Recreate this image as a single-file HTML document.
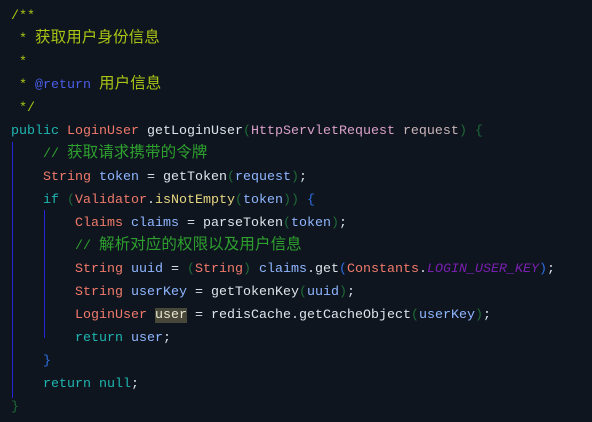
<!DOCTYPE html>
<html><head><meta charset="utf-8"><style>
html,body{margin:0;padding:0;}
body{width:592px;height:422px;overflow:hidden;background:#0e151f;position:relative;
font-family:"Liberation Mono","Noto Sans CJK SC",monospace;font-size:13.33px;}
.l{position:absolute;left:11px;height:23px;line-height:23px;white-space:pre;color:#d5dde6;margin-top:4px;}
.z{font-family:"Noto Sans CJK SC",sans-serif;font-size:15.5px;letter-spacing:0.1px;line-height:0;vertical-align:0}
.c{color:#a9c414}.tag{color:#4a5de8}.g{color:#2ea02e}
.k{color:#1fb5b0}.t{color:#f07a6a}.p{color:#1e6a38}.v{color:#8fb6ff}
.m{color:#dfe3ea}.y{color:#e6d680}.b{color:#2f6fe0}.pu{color:#7a1fb0;font-style:italic}
.h{background:#48483a}.pm{color:#d9a0c8}
.guide{position:absolute;width:1px;background:#2424d8}
</style></head><body>
<div class="guide" style="left:12px;top:142px;height:256px"></div>
<div class="guide" style="left:44px;top:210px;height:128px"></div>
<div class="l c" style="top:1px">/**</div>
<div class="l c" style="top:24px"> * <span class="z">获取用户身份信息</span></div>
<div class="l c" style="top:47px"> *</div>
<div class="l c" style="top:70px"> * <span class="tag">@return</span> <span class="z">用户信息</span></div>
<div class="l c" style="top:93px"> */</div>
<div class="l" style="top:116px"><span class="k">public</span> <span class="t">LoginUser</span> <span class="m">getLoginUser</span><span class="p">(</span><span class="pm">HttpServletRequest</span> <span style="color:#c9b4b8">request</span><span class="p">)</span> <span class="p">{</span></div>
<div class="l g" style="top:139px">    // <span class="z">获取请求携带的令牌</span></div>
<div class="l" style="top:162px">    <span class="t">String</span> <span class="v">token</span> = <span class="m">getToken</span><span class="p">(</span><span class="v">request</span><span class="p">)</span>;</div>
<div class="l" style="top:185px">    <span class="k">if</span> <span class="p">(</span><span class="t">Validator</span>.<span class="y">isNotEmpty</span><span class="p">(</span><span class="v">token</span><span class="p">))</span> <span class="b">{</span></div>
<div class="l" style="top:208px">        <span class="t">Claims</span> <span class="v">claims</span> = <span class="m">parseToken</span><span class="p">(</span><span class="v">token</span><span class="p">)</span>;</div>
<div class="l g" style="top:231px">        // <span class="z">解析对应的权限以及用户信息</span></div>
<div class="l" style="top:254px">        <span class="t">String</span> <span class="v">uuid</span> = <span class="p">(</span><span class="t">String</span><span class="p">)</span> <span class="v">claims</span>.<span class="m">get</span><span class="b">(</span><span class="t">Constants</span>.<span class="pu">LOGIN_USER_KEY</span><span class="b">)</span>;</div>
<div class="l" style="top:277px">        <span class="t">String</span> <span class="v">userKey</span> = <span class="m">getTokenKey</span><span class="p">(</span><span class="v">uuid</span><span class="p">)</span>;</div>
<div class="l" style="top:300px">        <span class="t">LoginUser</span> <span class="h" style="color:#e8e8d0">user</span> = <span class="m">redisCache</span>.<span class="m">getCacheObject</span><span class="p">(</span><span class="v">userKey</span><span class="p">)</span>;</div>
<div class="l" style="top:323px">        <span class="k">return</span> <span class="v">user</span>;</div>
<div class="l b" style="top:346px">    }</div>
<div class="l" style="top:369px">    <span class="k">return</span> <span class="k">null</span>;</div>
<div class="l p" style="top:392px">}</div>
</body></html>
